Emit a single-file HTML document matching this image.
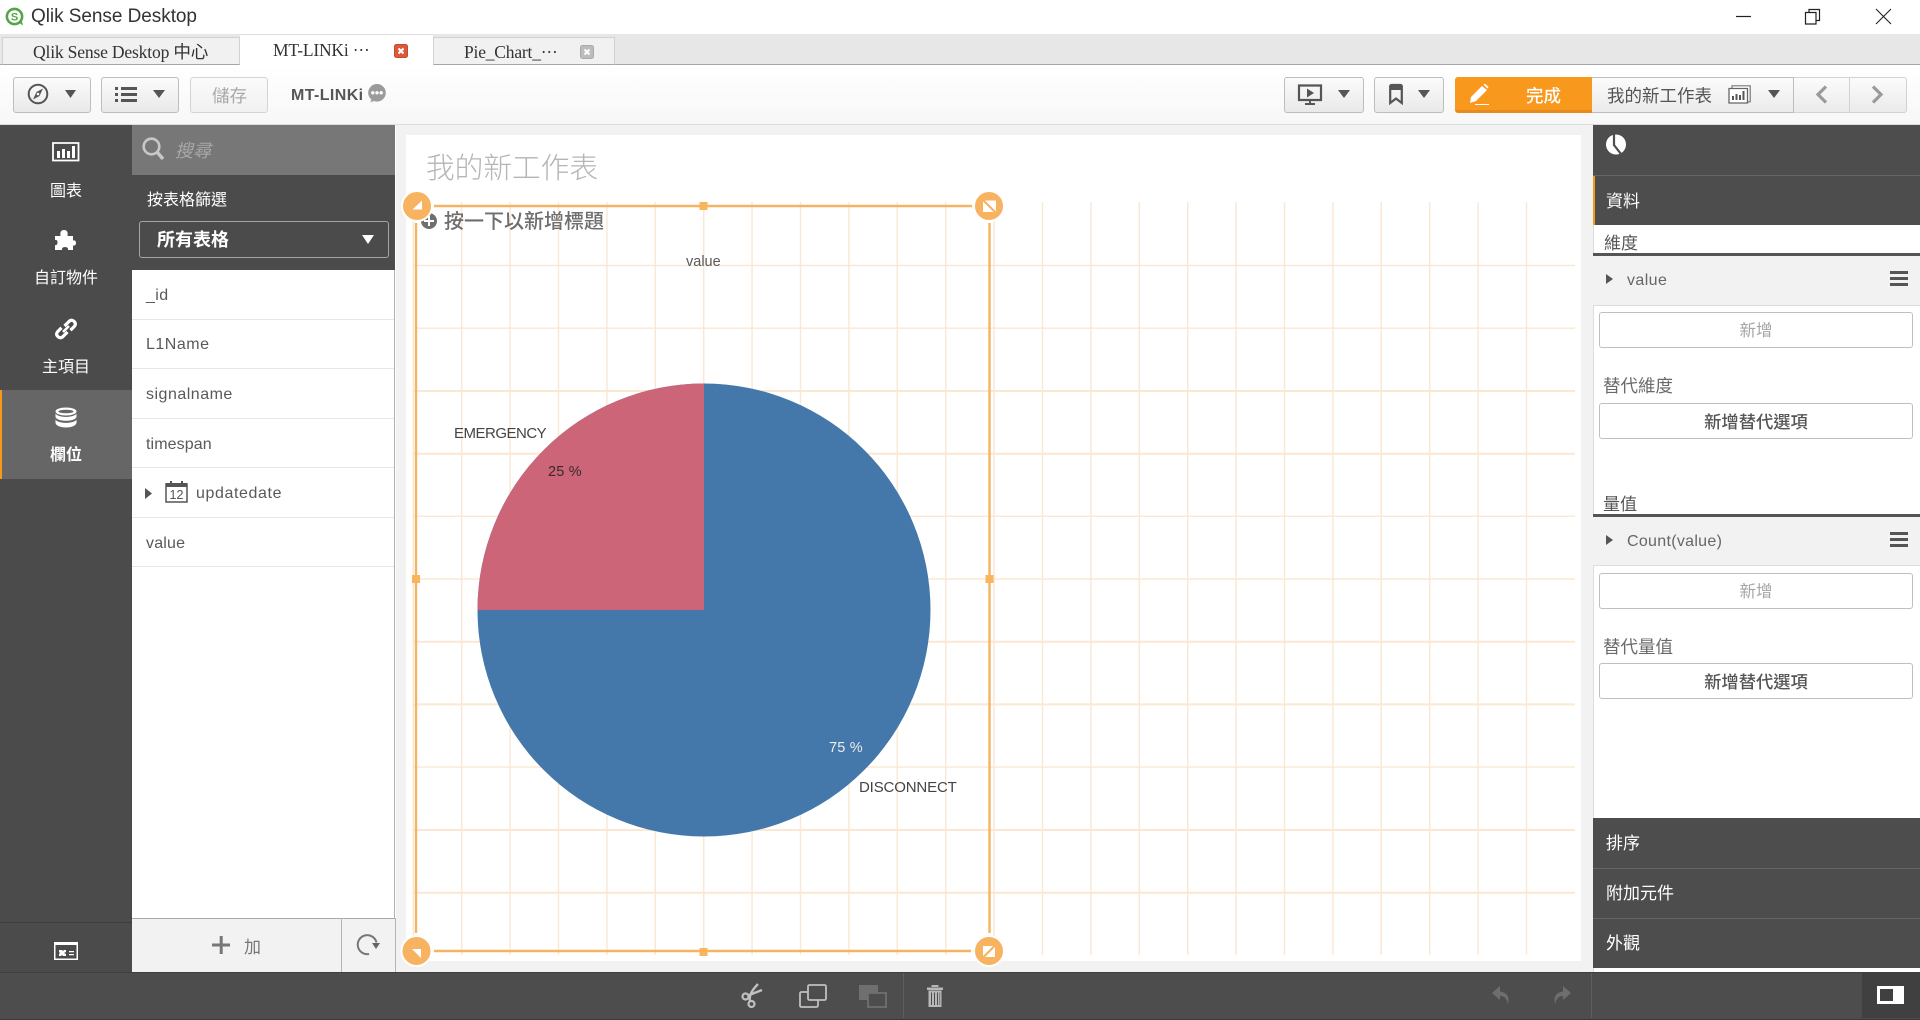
<!DOCTYPE html>
<html><head><meta charset="utf-8"><style>
*{box-sizing:border-box}
html,body{margin:0;padding:0;width:1920px;height:1020px;overflow:hidden;background:#fff}
body{position:relative;font-family:"Liberation Sans","Noto Sans CJK TC",sans-serif;color:#595959}
.a{position:absolute}
.t{position:absolute;white-space:nowrap;line-height:24px;height:24px}
.s{font-family:"Liberation Serif","Noto Sans CJK TC",serif}
.btn{position:absolute;border:1px solid #bdbdbd;border-radius:3px;background:linear-gradient(#fbfbfb,#e9e9e9)}
.w{color:#fff}
.row{position:absolute;left:132px;width:262px;height:50px;border-bottom:1px solid #e6e6e6}
.add{position:absolute;left:1599px;width:314px;border:1px solid #bfbfbf;border-radius:3px;background:#fff;text-align:center;font-size:16.5px;line-height:36px}
svg{position:absolute;overflow:visible}
</style></head><body>
<!-- title bar -->
<svg style="left:5px;top:7px" width="20" height="20" viewBox="0 0 20 20"><circle cx="9.5" cy="9.5" r="7.6" fill="none" stroke="#54a546" stroke-width="2.6"/><path d="M13 15l5 3.5-1.5-6z" fill="#54a546"/><text x="9.5" y="13.5" font-size="11" font-weight="700" text-anchor="middle" fill="#54a546" font-family="Liberation Sans">S</text></svg>
<div class="t" style="left:31px;top:5px;font-size:19px;color:#333;letter-spacing:-.05px">Qlik Sense Desktop</div>
<svg style="left:0;top:0" width="1920" height="34"><path d="M1736 16.500h15" stroke="#222" fill="none" stroke-width="1.200"/><path d="M1805.500 12.500h10.500v11.500h-10.500zM1809 12.500V9.500h10.500V20.500H1816" stroke="#222" fill="none" stroke-width="1.200"/><path d="M1876 9l15 15M1891 9l-15 15" stroke="#222" fill="none" stroke-width="1.100"/></svg>
<!-- tabs -->
<div class="a" style="left:0;top:34px;width:1920px;height:31px;background:#e7e7e7;border-bottom:1px solid #a6a6a6"></div>
<div class="a" style="left:2px;top:37px;width:238px;height:28px;background:#f1f1f1;border:1px solid #d2d2d2;border-bottom:1px solid #a6a6a6"></div>
<div class="a" style="left:433px;top:37px;width:182px;height:28px;background:#f1f1f1;border:1px solid #d2d2d2;border-bottom:1px solid #a6a6a6"></div>
<div class="a" style="left:240px;top:34px;width:193px;height:33px;background:#fff;border-top:1px solid #ddd"></div>
<div class="t s" style="left:33px;top:40px;font-size:17.600px;color:#333;letter-spacing:-.2px">Qlik Sense Desktop 中心</div>
<div class="t s" style="left:273px;top:38px;font-size:17.500px;color:#333;letter-spacing:-.2px">MT-LINKi ···</div>
<div class="t s" style="left:464px;top:40px;font-size:17.500px;color:#333;letter-spacing:-.2px">Pie_Chart_···</div>
<svg style="left:394px;top:44px" width="14" height="14"><rect x=".5" y=".5" width="13" height="13" rx="2" fill="#dc5a3c" stroke="#c9482f"/><path d="M4.500 4.500l5 5M9.500 4.500l-5 5" stroke="#fff" stroke-width="2" fill="none"/></svg>
<svg style="left:580px;top:45px" width="14" height="14"><rect x=".5" y=".5" width="13" height="13" rx="2" fill="#bcbcbc" stroke="#aaa"/><path d="M4.500 4.500l5 5M9.500 4.500l-5 5" stroke="#fff" stroke-width="2" fill="none"/></svg>
<!-- toolbar -->
<div class="a" style="left:0;top:66px;width:1920px;height:59px;background:linear-gradient(#fff,#f7f7f7);border-bottom:1px solid #dcdcdc"></div>
<div class="btn" style="left:13px;top:77px;width:78px;height:36px"></div>
<div class="btn" style="left:101px;top:77px;width:78px;height:36px"></div>
<div class="btn" style="left:190px;top:77px;width:78px;height:36px;background:linear-gradient(#fafafa,#f1f1f1);border-color:#d4d4d4"></div>
<svg style="left:26px;top:83px" width="24" height="24"><circle cx="12" cy="11" r="9.300" fill="none" stroke="#555" stroke-width="2"/><path d="M17 5.500L13.500 13 7 16.500 10.500 9z" fill="#555"/><circle cx="12" cy="11" r="1.300" fill="#fff"/></svg>
<svg style="left:65px;top:90px" width="11" height="8"><path d="M0 0h11L5.500 8z" fill="#555"/></svg>
<svg style="left:115px;top:87px" width="23" height="15"><path d="M0 0h3v3H0zM6 0h16v3H6zM0 6h3v3H0zM6 6h16v3H6zM0 12h3v3H0zM6 12h16v3H6z" fill="#555"/></svg>
<svg style="left:153px;top:90px" width="12" height="8"><path d="M0 0h12L6 8z" fill="#555"/></svg>
<div class="t" style="left:212px;top:84px;font-size:17.500px;color:#a8a8a8">儲存</div>
<div class="t" style="left:291px;top:84px;font-size:16px;font-weight:700;color:#555;letter-spacing:.4px">MT-LINKi</div>
<svg style="left:368px;top:84px" width="18" height="19"><circle cx="9" cy="8.800" r="8.800" fill="#9b9b9b"/><path d="M4 14l-1.500 4.500L8 16z" fill="#9b9b9b"/><circle cx="4.800" cy="8.800" r="1.700" fill="#fff"/><circle cx="9" cy="8.800" r="1.700" fill="#fff"/><circle cx="13.200" cy="8.800" r="1.700" fill="#fff"/></svg>

<div class="btn" style="left:1284px;top:77px;width:80px;height:36px"></div>
<div class="btn" style="left:1374px;top:77px;width:70px;height:36px"></div>
<div class="a" style="left:1455px;top:77px;width:138px;height:36px;background:#f8981d;border-bottom:3px solid #e58c1c;border-radius:3px 0 0 3px"></div>
<div class="a" style="left:1592px;top:77px;width:202px;height:36px;background:linear-gradient(#fbfbfb,#ebebeb);border:1px solid #bdbdbd;border-left:0"></div>
<div class="a" style="left:1794px;top:77px;width:56px;height:36px;background:linear-gradient(#fbfbfb,#ebebeb);border:1px solid #d2d2d2;border-left:0"></div>
<div class="a" style="left:1850px;top:77px;width:57px;height:36px;background:linear-gradient(#fbfbfb,#ebebeb);border:1px solid #d2d2d2;border-left:0;border-radius:0 3px 3px 0"></div>
<svg style="left:1298px;top:84px" width="24" height="22"><path d="M1 1.500h22v14.500H1z" fill="none" stroke="#555" stroke-width="2.200"/><path d="M9 4.500l7 4.500-7 4.500z" fill="#555"/><path d="M11 16h2v3h-2zM7 19h10v2H7z" fill="#555"/></svg>
<svg style="left:1338px;top:90px" width="12" height="8"><path d="M0 0h12L6 8z" fill="#555"/></svg>
<svg style="left:1389px;top:84px" width="14" height="21"><path d="M1.200 2.500Q1.200 1 3 1h8q1.800 0 1.800 1.500V19L7 14.500 1.200 19z" fill="none" stroke="#555" stroke-width="2.200"/><path d="M1 1h12v5H1z" fill="#555"/></svg>
<svg style="left:1418px;top:90px" width="12" height="8"><path d="M0 0h12L6 8z" fill="#555"/></svg>
<svg style="left:1468px;top:83px" width="24" height="22"><path d="M14 3l5 4L8 18l-6 2 1-6z" fill="#fff"/><path d="M15.500 1.800l1.500-1 3.500 3-.8 1.800z" fill="#fff"/><path d="M7 21.500h14" stroke="#fff" stroke-width="1"/></svg>
<div class="t w" style="left:1526px;top:84px;font-size:17.500px;font-weight:500">完成</div>
<div class="t" style="left:1607px;top:84px;font-size:17.500px;color:#555">我的新工作表</div>
<svg style="left:1728px;top:85px" width="24" height="19"><path d="M4 .8h18.200v16H4z" fill="#fff" stroke="#777" stroke-width="1.200"/><path d="M1 3.500h18.500v14.500H1z" fill="#fff" stroke="#666" stroke-width="1.300"/><path d="M4 11h2v4H4zM7.500 9h2v6h-2zM11 10h2v5h-2zM14.500 6h2v9h-2z" fill="#555"/></svg>
<svg style="left:1768px;top:90px" width="12" height="8"><path d="M0 0h12L6 8z" fill="#555"/></svg>
<svg style="left:1815px;top:85px" width="13" height="19"><path d="M11 1.500L3 9.500l8 8" fill="none" stroke="#9a9a9a" stroke-width="3.200"/></svg>
<svg style="left:1871px;top:85px" width="13" height="19"><path d="M2 1.500l8 8-8 8" fill="none" stroke="#9a9a9a" stroke-width="3.200"/></svg>

<!-- left sidebar -->
<div class="a" style="left:0;top:125px;width:132px;height:847px;background:#4b4b4b"></div>
<div class="a" style="left:0;top:390px;width:132px;height:89px;background:#666;border-left:2px solid #f8981d"></div>
<div class="a" style="left:0;top:922px;width:132px;height:1px;background:#3e3e3e"></div>
<svg style="left:52px;top:142px" width="28" height="20"><path d="M1 1h25.500v17.500H1z" fill="none" stroke="#fff" stroke-width="1.800"/><path d="M5 9h3v7H5zM10 7h3v9h-3zM15 9h3v7h-3zM20 4h3v12h-3z" fill="#fff"/></svg>
<div class="t w" style="left:0;width:132px;text-align:center;top:180px;font-size:16px">圖表</div>
<svg style="left:55px;top:230px" width="21" height="20"><path d="M0 6h5.500Q4.500 0 9 0t3.500 6H18v4.500q3-.5 3 2.500t-3 2.500V20h-5q.5-3-3-3t-3 3H0v-5q2.500.5 2.500-2.500T0 10z" fill="#fff"/></svg>
<div class="t w" style="left:0;width:132px;text-align:center;top:267px;font-size:16px">自訂物件</div>
<svg style="left:55px;top:318px" width="22" height="22"><path d="M9.500 8l5-5q2.500-1.700 4.700.5t.3 4.700l-4 4M12.500 14l-5 5q-2.500 1.700-4.700-.5t-.3-4.700l4-4" fill="none" stroke="#fff" stroke-width="3.200"/><path d="M8 14l6-6" stroke="#fff" stroke-width="2.600"/></svg>
<div class="t w" style="left:0;width:132px;text-align:center;top:356px;font-size:16px">主項目</div>
<svg style="left:55px;top:407px" width="22" height="22"><ellipse cx="11" cy="4.500" rx="10.500" ry="4" fill="#fff"/><ellipse cx="11" cy="4.500" rx="7.500" ry="1.800" fill="#666"/><path d="M.5 6.500v3.500c1.500 5 19.500 5 21 0V6.500c-2 4.500-19 4.500-21 0zM.5 12.500V16c1.500 6 19.500 6 21 0v-3.500c-2 4.500-19 4.500-21 0z" fill="#fff"/></svg>
<div class="t w" style="left:0;width:132px;text-align:center;top:444px;font-size:16px;font-weight:700">欄位</div>
<svg style="left:54px;top:942px" width="24" height="18"><path d="M0 0h24v18H0z" fill="#fff"/><path d="M1.500 3h21v13.500h-21z" fill="#4b4b4b"/><path d="M5 8h3l1 1 1-1h2v2l-2 1 2 1v2H9l-1-1-1 1H5v-2l1-1-1-1z" fill="#fff"/><path d="M15 9h5v1.300h-5zM15 12h5v1.300h-5z" fill="#fff"/></svg>

<!-- assets panel -->
<div class="a" style="left:132px;top:125px;width:263px;height:847px;background:#fff;border-right:1px solid #b0b0b0"></div>
<div class="a" style="left:132px;top:125px;width:263px;height:50px;background:#777"></div>
<div class="a" style="left:132px;top:175px;width:263px;height:95px;background:#4b4b4b"></div>
<svg style="left:142px;top:137px" width="23" height="24"><circle cx="9.500" cy="9.500" r="7.800" fill="none" stroke="#c8c8c8" stroke-width="2.600"/><path d="M15 15l6 7" stroke="#c8c8c8" stroke-width="3.400"/></svg>
<div class="t" style="left:175px;top:139px;font-size:18px;font-style:italic;color:#a8a8a8">搜尋</div>
<div class="t w" style="left:147px;top:189px;font-size:16px">按表格篩選</div>
<div class="a" style="left:139px;top:221px;width:250px;height:37px;border:1px solid #a5a5a5;border-radius:3px"></div>
<div class="t w" style="left:157px;top:228px;font-size:18px;font-weight:700">所有表格</div>
<svg style="left:362px;top:235px" width="12" height="9"><path d="M0 0h12L6 9z" fill="#fff"/></svg>
<div class="row" style="top:270px"></div><div class="row" style="top:319px"></div><div class="row" style="top:369px"></div><div class="row" style="top:418px"></div><div class="row" style="top:468px"></div><div class="row" style="top:517px"></div>
<div class="t" style="left:146px;top:284px;font-size:16px;letter-spacing:.4px">_id</div>
<div class="t" style="left:146px;top:333px;font-size:16px;letter-spacing:.5px">L1Name</div>
<div class="t" style="left:146px;top:383px;font-size:16px;letter-spacing:.5px">signalname</div>
<div class="t" style="left:146px;top:433px;font-size:16px;letter-spacing:.1px">timespan</div>
<svg style="left:145px;top:488px" width="8" height="11"><path d="M0 0l7 5.500L0 11z" fill="#555"/></svg>
<svg style="left:165px;top:481px" width="23" height="22"><path d="M1 3h21v18H1z" fill="#fff" stroke="#555" stroke-width="1.500"/><path d="M1 2h21v4H1z" fill="#555"/><path d="M5 0h2v3H5zM16 0h2v3h-2z" fill="#555"/><text x="11.500" y="18" font-size="12.500" text-anchor="middle" fill="#555" font-family="Liberation Sans">12</text></svg>
<div class="t" style="left:196px;top:482px;font-size:16px;letter-spacing:.6px">updatedate</div>
<div class="t" style="left:146px;top:532px;font-size:16px;letter-spacing:.2px">value</div>
<div class="a" style="left:132px;top:918px;width:263px;height:54px;background:#f2f2f2;border-top:1px solid #aaa"></div>
<div class="a" style="left:341px;top:918px;width:1px;height:54px;background:#b4b4b4"></div>
<div class="a" style="left:395px;top:918px;width:1px;height:54px;background:#b4b4b4"></div>
<svg style="left:212px;top:936px" width="19" height="19"><path d="M7.700 0h3v18h-3zM0 7.500h18v3H0z" fill="#777"/></svg>
<div class="t" style="left:244px;top:936px;font-size:17px;color:#777">加</div>
<svg style="left:357px;top:934px" width="24" height="22"><path d="M19.500 8.500A9.500 9.500 0 1 0 12 20" fill="none" stroke="#777" stroke-width="2"/><path d="M15 9l8 0-4 6z" fill="#666"/></svg>

<!-- canvas -->
<div class="a" style="left:396px;top:125px;width:1197px;height:847px;background:#f2f2f2"></div>
<div class="a" style="left:406px;top:135px;width:1175px;height:826px;background:#fff"></div>
<div class="t" style="left:426px;top:152px;font-size:28.700px;line-height:34px;height:34px;color:#b5b5b5;font-weight:300">我的新工作表</div>
<svg style="left:421px;top:213px" width="17" height="17"><circle cx="8" cy="8" r="8" fill="#6f6f6f"/><path d="M7 3h2v10H7zM3 7h10v2H3z" fill="#fff"/></svg>
<svg style="left:0;top:0" width="1920" height="1020" id="g">
<g fill="none" stroke="#fbe7d2" stroke-width="1.400">
<path d="M413 265.500H1575M413 328.200H1575"/>
<path d="M413 391H1575M413 453.700H1575" stroke-width="2"/>
<path d="M413 516.300H1575M413 579H1575"/>
<path d="M413 641.700H1575M413 704.400H1575" stroke-width="2"/>
<path d="M413 767.100H1575"/>
<path d="M413 830H1575M413 892.700H1575" stroke-width="2"/>
<path d="M413.300 202V955M461.700 202V955M510.100 202V955M558.500 202V955M606.900 202V955M655.300 202V955M703.700 202V955M752.100 202V955M800.500 202V955M848.900 202V955M897.300 202V955M945.700 202V955M994.100 202V955M1042.500 202V955M1090.900 202V955M1139.300 202V955M1187.700 202V955M1236.100 202V955M1284.500 202V955M1332.900 202V955M1381.300 202V955M1429.700 202V955M1478.100 202V955M1526.500 202V955"/>
</g>
<circle cx="704" cy="610" r="226.500" fill="#4477aa"/>
<path d="M704 610V383.500A226.500 226.500 0 0 0 477.500 610z" fill="#cb6577"/>
<g stroke="#f4b464" stroke-width="2.400" fill="none"><path d="M434 206H972M434 951H971M416 223V933M989.500 223V933"/></g>
<g fill="#f9b45c"><rect x="699.500" y="202" width="8" height="8"/><rect x="699.500" y="948" width="8" height="8"/><rect x="412" y="575" width="8" height="8"/><rect x="985.500" y="575" width="8" height="8"/></g>
<g fill="#f7b360" stroke="#fff" stroke-width="2"><circle cx="417" cy="206" r="15"/><circle cx="989" cy="206" r="15"/><circle cx="416.500" cy="951" r="15"/><circle cx="989" cy="951" r="15"/></g>
<path d="M412.500 209.500h9.500v-9z" fill="#fff"/><path d="M412 949h9v9z" fill="#fff"/>
<path d="M983 201.500v10.500h10.500zM985 200.500h11v11z" fill="#fff"/>
<path d="M983 946h10l-10 10zM995 947v10h-10z" fill="#fff"/>
</svg>
<div class="t" style="left:444px;top:210px;font-size:20px;color:#6e6e6e;font-weight:500">按一下以新增標題</div>
<div class="t" style="left:686px;top:250px;font-size:14.500px;color:#595959">value</div>
<div class="t" style="left:454px;top:422px;font-size:15px;color:#444;letter-spacing:-.5px">EMERGENCY</div>
<div class="t" style="left:548px;top:460px;font-size:14.500px;color:#3a2a30;letter-spacing:.2px">25 %</div>
<div class="t" style="left:829px;top:736px;font-size:14.500px;color:#eee;letter-spacing:.2px">75 %</div>
<div class="t" style="left:859px;top:776px;font-size:15px;color:#444;letter-spacing:-.15px">DISCONNECT</div>

<!-- right panel -->
<div class="a" style="left:1593px;top:125px;width:327px;height:847px;background:#fff;border-left:1px solid #ddd"></div>
<div class="a" style="left:1593px;top:125px;width:327px;height:100px;background:#4d4d4d"></div>
<div class="a" style="left:1593px;top:175px;width:327px;height:1px;background:#666"></div>
<div class="a" style="left:1593px;top:176px;width:2px;height:49px;background:#f8981d"></div>
<svg style="left:1605px;top:134px" width="22" height="21"><circle cx="11" cy="10.500" r="10" fill="#fff"/><path d="M9 0v11l7 9" fill="none" stroke="#4d4d4d" stroke-width="2.200"/></svg>
<div class="t w" style="left:1606px;top:190px;font-size:17px">資料</div>
<div class="a" style="left:1593px;top:225px;width:327px;height:28px;overflow:hidden"><div class="t" style="left:11px;top:7px;font-size:17px;color:#555">維度</div></div>
<div class="a" style="left:1593px;top:253px;width:327px;height:3px;background:#555"></div>
<div class="a" style="left:1593px;top:256px;width:327px;height:50px;background:#f2f2f2;border-bottom:1px solid #ddd"></div>
<svg style="left:1606px;top:274px" width="8" height="10"><path d="M0 0l7 5-7 5z" fill="#555"/></svg>
<div class="t" style="left:1627px;top:269px;font-size:16px;letter-spacing:.4px;color:#666">value</div>
<svg style="left:1890px;top:271px" width="18" height="15"><path d="M0 0h18v3H0zM0 6h18v3H0zM0 12h18v3H0z" fill="#555"/></svg>
<div class="add" style="top:312px;height:36px;color:#a5a5a5">新增</div>
<div class="t" style="left:1603px;top:374px;font-size:17.500px;color:#6a6a6a">替代維度</div>
<div class="add" style="top:403px;height:36px;color:#555;font-size:17.300px;font-weight:500">新增替代選項</div>
<div class="a" style="left:1593px;top:490px;width:327px;height:24px;overflow:hidden"><div class="t" style="left:10px;top:3px;font-size:17px;color:#555">量值</div></div>
<div class="a" style="left:1593px;top:514px;width:327px;height:3px;background:#555"></div>
<div class="a" style="left:1593px;top:517px;width:327px;height:49px;background:#f2f2f2;border-bottom:1px solid #ddd"></div>
<svg style="left:1606px;top:535px" width="8" height="10"><path d="M0 0l7 5-7 5z" fill="#555"/></svg>
<div class="t" style="left:1627px;top:530px;font-size:16px;letter-spacing:.3px;color:#666">Count(value)</div>
<svg style="left:1890px;top:532px" width="18" height="15"><path d="M0 0h18v3H0zM0 6h18v3H0zM0 12h18v3H0z" fill="#555"/></svg>
<div class="add" style="top:573px;height:36px;color:#a5a5a5">新增</div>
<div class="t" style="left:1603px;top:635px;font-size:17.500px;color:#6a6a6a">替代量值</div>
<div class="add" style="top:663px;height:36px;color:#555;font-size:17.300px;font-weight:500">新增替代選項</div>
<div class="a" style="left:1593px;top:818px;width:327px;height:150px;background:#4d4d4d"></div>
<div class="a" style="left:1593px;top:868px;width:327px;height:1px;background:#666"></div>
<div class="a" style="left:1593px;top:918px;width:327px;height:1px;background:#666"></div>
<div class="t w" style="left:1606px;top:832px;font-size:17px">排序</div>
<div class="t w" style="left:1606px;top:882px;font-size:17px">附加元件</div>
<div class="t w" style="left:1606px;top:932px;font-size:17px">外觀</div>

<!-- bottom bar -->
<div class="a" style="left:0;top:972px;width:1920px;height:48px;background:#4d4d4d;border-top:1px solid #3f3f3f;border-bottom:1px solid #3a3a3a"></div>
<div class="a" style="left:903px;top:973px;width:1px;height:45px;background:#5e5e5e"></div>
<div class="a" style="left:1591px;top:973px;width:1px;height:45px;background:#5e5e5e"></div>
<div class="a" style="left:1862px;top:973px;width:58px;height:45px;background:#404040"></div>
<svg style="left:1877px;top:986px" width="27" height="18"><path d="M0 0h27v18H0z" fill="#fff"/><path d="M3 3h13v12H3z" fill="#404040"/></svg>
<svg style="left:740px;top:984px" width="24" height="24"><circle cx="5.500" cy="12.500" r="3" fill="none" stroke="#c0c0c0" stroke-width="2.200"/><circle cx="11.500" cy="20" r="3" fill="none" stroke="#c0c0c0" stroke-width="2.200"/><path d="M8 11.500L22 6M10 17.500Q8 10 18 0" fill="none" stroke="#c0c0c0" stroke-width="2.400"/></svg>
<svg style="left:799px;top:984px" width="28" height="24"><rect x="9" y="1" width="18" height="15" rx="1.500" fill="none" stroke="#c0c0c0" stroke-width="1.800"/><path d="M9 8H2.500Q1 8 1 9.500V21.500Q1 23 2.500 23H17Q19 23 19 21V16" fill="none" stroke="#c0c0c0" stroke-width="1.800"/></svg>
<svg style="left:859px;top:984px" width="28" height="24"><rect x="0" y="1" width="19" height="15" fill="#6f6f6f"/><rect x="9" y="9" width="18" height="14" fill="#4d4d4d" stroke="#6f6f6f" stroke-width="1.800"/></svg>
<svg style="left:926px;top:984px" width="18" height="24"><path d="M1 3.500h16v2.500H1zM5.500 1h7v2h-7z" fill="#b8b8b8"/><path d="M2.500 6.500h13V23h-13z" fill="#b8b8b8"/><path d="M5 8.500h1v12.500H5zM8 8.500h1v12.500H8zM11 8.500h1v12.500h-1zM13.500 8.500h.6v12.500h-.6z" fill="#4d4d4d"/></svg>
<svg style="left:1491px;top:985px" width="20" height="20"><path d="M9 1L1 8l8 7v-4q6-.5 8 8 2.500-11-8-12.500z" fill="#6e6e6e"/></svg>
<svg style="left:1552px;top:985px" width="20" height="20"><path d="M11 1l8 7-8 7v-4q-6-.5-8 8Q.5 8 11 6.500z" fill="#6e6e6e"/></svg>
</body></html>
